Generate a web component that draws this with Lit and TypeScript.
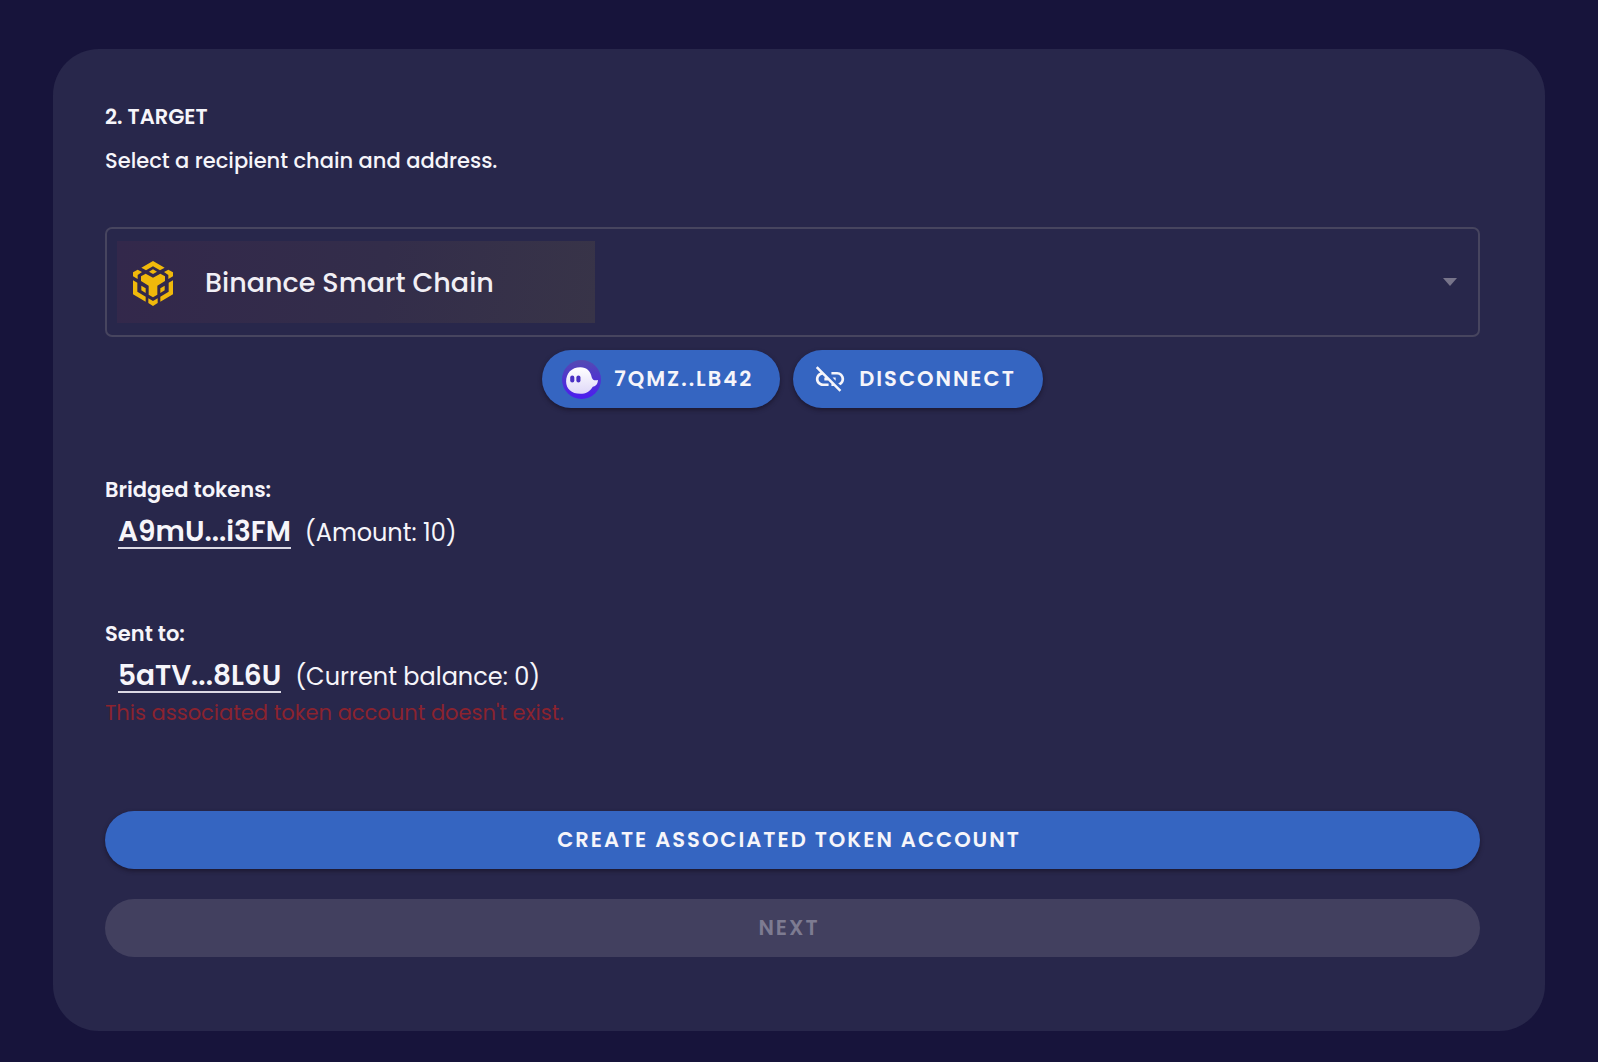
import { LitElement, html, css } from "lit";
import { customElement, property } from "lit/decorators.js";

@customElement("token-line")
class TokenLine extends LitElement {
  @property() label = "";
  @property() address = "";
  @property() detail = "";

  static styles = css`
    :host {
      display: block;
    }
    .label {
      margin: 0;
      font-size: 21px;
      font-weight: 600;
      line-height: 32px;
    }
    .row {
      display: flex;
      align-items: baseline;
      gap: 14px;
      padding: 10px 13px 0;
    }
    .address {
      color: inherit;
      font-size: 28px;
      font-weight: 600;
      line-height: 31px;
      text-decoration: none;
      border-bottom: 2px solid #dcd9e4;
    }
    .detail {
      font-size: 24px;
      line-height: 31px;
    }
  `;

  render() {
    return html`
      <p class="label">${this.label}</p>
      <div class="row">
        <a class="address" href="#">${this.address}</a>
        <span class="detail">${this.detail}</span>
      </div>
    `;
  }
}

@customElement("app-root")
class AppRoot extends LitElement {
  static styles = css`
    :host {
      display: block;
      box-sizing: border-box;
      min-height: 100vh;
      padding: 49px 53px 31px;
      background: #17143b;
      color: #f6f5fa;
      font-family: Poppins, Inter, "Open Sans", sans-serif;
    }
    .card {
      display: flex;
      flex-direction: column;
      padding: 52px 65px 74px 52px;
      border-radius: 46px;
      background: #28274b;
    }
    .title,
    .subtitle {
      margin: 0;
      font-size: 21px;
      line-height: 32px;
    }
    .title {
      font-weight: 600;
    }
    .subtitle {
      margin-top: 12px;
      font-weight: 500;
    }
    .chain {
      display: grid;
      grid-template-columns: minmax(0, 1fr);
      align-items: center;
      margin-top: 50px;
      height: 106px;
      border: 2px solid #47455f;
      border-radius: 7px;
    }
    .chain > * {
      grid-area: 1 / 1;
    }
    .highlight {
      display: flex;
      align-items: center;
      box-sizing: border-box;
      width: 35%;
      max-width: 478px;
      height: 82px;
      margin-left: 10px;
      padding: 3px 0 0 16px;
      background: linear-gradient(100deg, #33284b, #332d4a 55%, #383448);
    }
    .chain-logo {
      width: 40px;
      height: 45px;
      fill: #f0b90b;
    }
    .arrow {
      justify-self: end;
      width: 14px;
      height: 8px;
      margin-right: 21px;
      fill: #77748a;
      pointer-events: none;
    }
    .select {
      width: 100%;
      height: 100%;
      padding: 0 60px 0 98px;
      border: 0;
      background: transparent;
      appearance: none;
      color: #f1eff5;
      font: 500 27px Poppins, Inter, "Open Sans", sans-serif;
    }
    .wallet {
      display: flex;
      justify-content: center;
      align-items: center;
      gap: 13px;
      margin-top: 13px;
    }
    .button {
      display: flex;
      justify-content: center;
      align-items: center;
      box-sizing: border-box;
      min-height: 58px;
      padding: 0 27px 2px 20px;
      border: 0;
      border-radius: 29px;
      background: #3565c1;
      box-shadow: 0 2px 4px rgba(20, 14, 30, 0.6);
      color: #f6f5fa;
      font: 600 21px Poppins, Inter, "Open Sans", sans-serif;
      letter-spacing: 2px;
      text-transform: uppercase;
    }
    .ghost {
      width: 39px;
      height: 39px;
      margin: 2px 13px 0 0;
    }
    .unlink {
      width: 34px;
      height: 34px;
      margin: 2px 12px 0 0;
      fill: currentColor;
    }
    .bridged {
      margin-top: 66px;
    }
    .sent {
      margin-top: 69px;
    }
    .error {
      margin: 4px 0 0;
      color: #8b232f;
      font-size: 21px;
      line-height: 32px;
    }
    .create {
      margin-top: 82px;
    }
    .next {
      margin-top: 30px;
      background: #42405f;
      box-shadow: none;
      color: #7d7b91;
    }
  `;

  render() {
    return html`
      <main class="card">
        <h1 class="title">2. TARGET</h1>
        <p class="subtitle">Select a recipient chain and address.</p>

        <div class="chain">
          <div class="highlight">
            <svg class="chain-logo" viewBox="0 0 120 135" aria-hidden="true">
              <path d="M60 0 95 20 81 28 60 16 39 28 25 20Z" />
              <path d="M60 25 72 32 60 39 48 32Z" />
              <path d="M14 26 27 33 14 42V54L0 46V34Z" />
              <path d="M106 26 93 33 106 42V54L120 46V34Z" />
              <path d="M38 38 60 50 82 38 96 46V60L73 74V101L60 109 47 101V74L24 60V46Z" />
              <path d="M0 58 13 65V92L38 107V122L0 100Z" />
              <path d="M120 58 107 65V92L82 107V122L120 100Z" />
              <path d="M25 74 38 82V96L25 88Z" />
              <path d="M95 74 82 82V96L95 88Z" />
              <path d="M46 112 60 120 74 112V126L60 135 46 126Z" />
            </svg>
          </div>
          <select class="select" aria-label="Recipient chain">
            <option>Binance Smart Chain</option>
          </select>
          <svg class="arrow" viewBox="0 0 14 8" aria-hidden="true">
            <path d="M0 0H14L7 8Z" />
          </svg>
        </div>

        <div class="wallet">
          <button class="button" type="button">
            <svg class="ghost" viewBox="0 0 38 38" aria-hidden="true">
              <defs>
                <linearGradient id="disc" x1="0" y1="0" x2="0" y2="1">
                  <stop offset="0" stop-color="#534bb1" />
                  <stop offset="1" stop-color="#4c1cf0" />
                </linearGradient>
                <linearGradient id="body" x1="0" y1="0" x2="0" y2="1">
                  <stop offset="0" stop-color="#ffffff" />
                  <stop offset="1" stop-color="#dfd8f8" />
                </linearGradient>
              </defs>
              <circle cx="19" cy="19" r="19" fill="url(#disc)" />
              <path
                fill="url(#body)"
                d="M18 7C24 7 28 11 29 17C30 20 32 20 35 19.5C35 24 32 26 30 26C27 31 23 33 18 33C9 33 4 28 4 21C4 13 9 7 18 7Z"
              />
              <rect x="8" y="15" width="4" height="7" rx="2" fill="#4a2fc4" />
              <rect x="14" y="15" width="4" height="7" rx="2" fill="#4a2fc4" />
            </svg>
            7QMZ..LB42
          </button>
          <button class="button" type="button">
            <svg class="unlink" viewBox="0 0 24 24" aria-hidden="true">
              <path
                d="M17 7h-4v1.9h4c1.71 0 3.1 1.39 3.1 3.1 0 1.43-.98 2.63-2.31 2.98l1.46 1.46C20.88 15.61 22 13.95 22 12c0-2.76-2.24-5-5-5zm-1 4h-2.19l2 2H16v-2zM2 4.27l3.11 3.11C3.29 8.12 2 9.91 2 12c0 2.76 2.24 5 5 5h4v-1.9H7c-1.71 0-3.1-1.39-3.1-3.1 0-1.59 1.21-2.9 2.76-3.07L8.73 11H8v2h2.73L13 15.27V17h1.73l4.01 4L20 19.74 3.27 3 2 4.27z"
              />
            </svg>
            Disconnect
          </button>
        </div>

        <token-line
          class="bridged"
          label="Bridged tokens:"
          address="A9mU...i3FM"
          detail="(Amount: 10)"
        ></token-line>
        <token-line
          class="sent"
          label="Sent to:"
          address="5aTV...8L6U"
          detail="(Current balance: 0)"
        ></token-line>
        <p class="error">This associated token account doesn't exist.</p>

        <button class="button create" type="button">Create associated token account</button>
        <button class="button next" type="button" disabled>Next</button>
      </main>
    `;
  }
}
